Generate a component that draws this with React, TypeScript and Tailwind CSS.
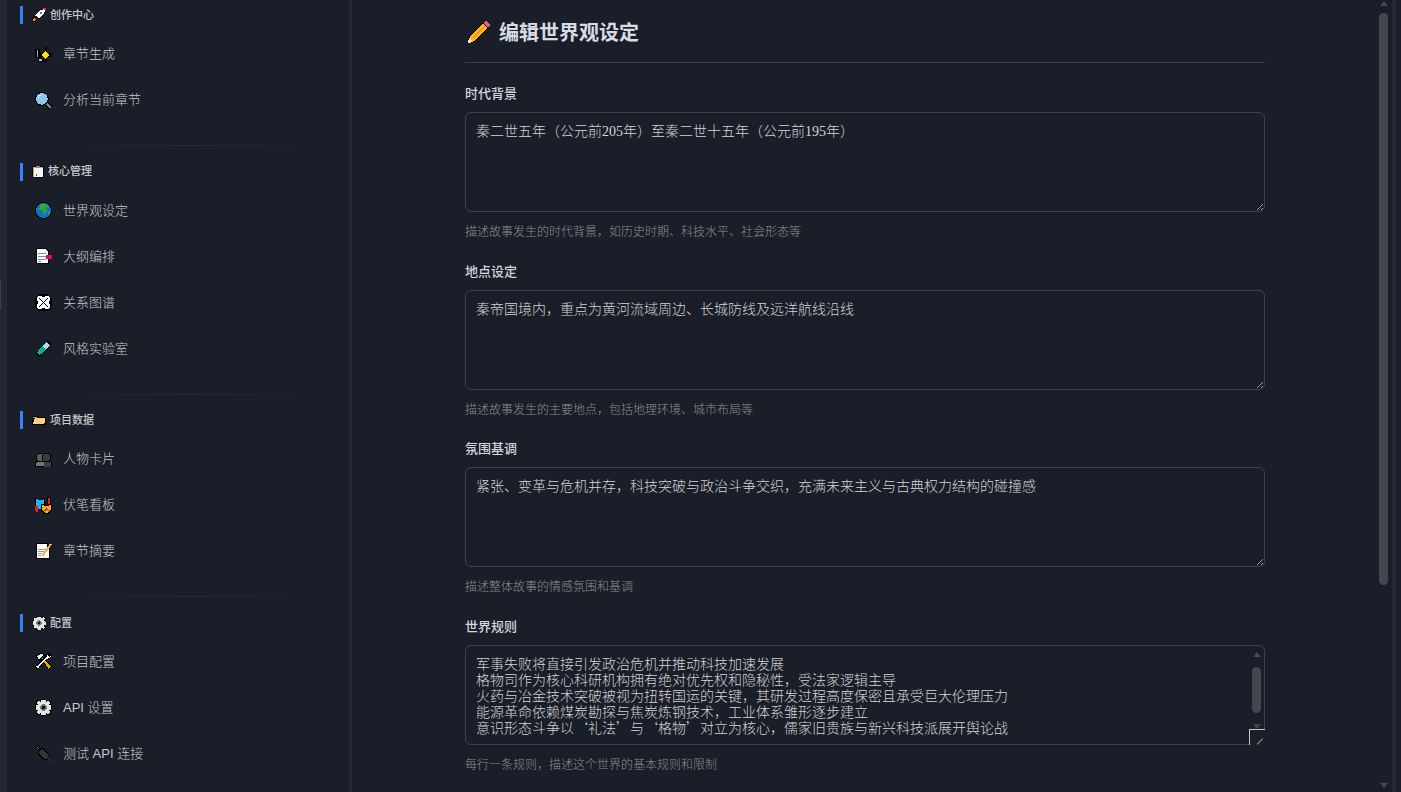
import type { ReactNode } from "react";

const FONT = "font-['Liberation_Sans','Noto_Sans_CJK_SC',sans-serif]";

/* emoji drawn by hand, the reference has aliased windows emoji */
const Svg = ({ size = 17, children }: { size?: number; children: ReactNode }) => (
  <svg width={size} height={size} viewBox="0 0 16 16" shapeRendering="crispEdges" className="shrink-0">
    {children}
  </svg>
);

const Rocket = () => (
  <Svg size={14}>
    <path d="M0 16l2-6 4 4z" fill="#f59e0b" stroke="#000" />
    <path d="M3 9C5 5 10 1 16 0c0 6-4 10-8 12z" fill="#fff" stroke="#000" />
    <path d="M12 0h4v4z" fill="#e02d2d" />
    <rect x="9" y="5" width="2" height="2" fill="#3b82f6" />
  </Svg>
);
const Clipboard = () => (
  <Svg size={12}>
    <rect x="1" y="1" width="14" height="14" fill="#c8a27a" stroke="#000" />
    <rect x="3" y="2" width="11" height="12" fill="#f4f4f4" />
    <rect x="5" y="11" width="2" height="2" fill="#555" />
    <rect x="5" y="0" width="6" height="2" fill="#888" />
  </Svg>
);
const Folder = () => (
  <Svg size={14}>
    <path d="M0 3h7l1 1h7l1 1v9H0z" fill="#000" />
    <path d="M3 6h12l-1 7H1z" fill="#ffd27a" />
    <rect x="1" y="4" width="5" height="2" fill="#f0a020" />
  </Svg>
);
const Gear = ({ size = 17 }: { size?: number }) => (
  <Svg size={size}>
    <path d="M6 0h4l1 2 2-1 2 2-1 2 2 1v4l-2 1 1 2-2 2-2-1-1 2H6l-1-2-2 1-2-2 1-2-2-1V6l2-1-1-2 2-2 2 1z" fill="#e4e4e4" stroke="#000" />
    <circle cx="8" cy="8" r="3" fill="#777" />
    <rect x="7" y="7" width="2" height="2" fill="#111" />
  </Svg>
);
const Sparkles = () => (
  <Svg>
    <rect x="9" y="1" width="2" height="15" fill="#000" />
    <rect x="5" y="7" width="11" height="3" fill="#000" />
    <path d="M10 4.500l3.500 4-3.500 4-3.500-4z" fill="#ffe600" />
    <rect x="0" y="3" width="5" height="8" fill="#000" />
    <rect x="2" y="4" width="1" height="6" fill="#37c6f4" />
    <rect x="3" y="11" width="5" height="4" fill="#000" />
    <rect x="4" y="12" width="3" height="2" fill="#f4a6c0" />
  </Svg>
);
const Magnifier = () => (
  <Svg>
    <path d="M9 9l6 6" stroke="#000" strokeWidth="4" />
    <path d="M10 10l5 5" stroke="#7b8a90" strokeWidth="2" />
    <circle cx="6.500" cy="6.500" r="6" fill="#8cc4f0" stroke="#000" />
    <path d="M3 6c0-2 1-3 3-3" stroke="#e8f4fc" fill="none" />
  </Svg>
);
const Globe = () => (
  <Svg>
    <circle cx="8" cy="8" r="7.500" fill="#0e70c8" stroke="#000" />
    <path d="M5 2h5l3 2-3 2 2 2-4 4-1-4-4-1 2-2z" fill="#35a635" />
    <path d="M12 9h2v2l-2 2z" fill="#35a635" />
  </Svg>
);
const Outline = () => (
  <Svg>
    <path d="M1 0h9l3 3v12H1z" fill="#fff" stroke="#000" />
    <path d="M3 5h7M3 8h7M3 11h7M3 13h3" stroke="#8a8a8a" />
    <rect x="10" y="7" width="6" height="3" fill="#e6007e" />
  </Svg>
);
const Web = () => (
  <Svg>
    <path d="M4 0h8l4 4v8l-4 4H4l-4-4V4z" fill="#000" />
    <path d="M3 2h10l1 1v10l-1 1H3l-1-1V3z" fill="#fff" />
    <path d="M4 4l8 8M12 4l-8 8" stroke="#000" />
    <rect x="7" y="2" width="2" height="1" fill="#000" />
    <rect x="7" y="13" width="2" height="1" fill="#000" />
    <rect x="2" y="7" width="1" height="2" fill="#000" />
    <rect x="13" y="7" width="1" height="2" fill="#000" />
  </Svg>
);
const TestTube = () => (
  <Svg>
    <path d="M12 0l4 4L6 14l-3 2-3-3 2-3z" fill="#000" />
    <path d="M11 2l3 3-8 8-2 1-2-2 1-2z" fill="#0fae94" />
    <path d="M11 2l3 3-4 4-3-3z" fill="#a9daf0" />
  </Svg>
);
const Busts = () => (
  <Svg>
    <path d="M0 15v-4l2-1h12l2 1v4z" fill="#767676" stroke="#000" />
    <rect x="8" y="10" width="7" height="5" fill="#3c3c3c" />
    <circle cx="5" cy="6" r="4" fill="#5a5a5a" stroke="#000" />
    <circle cx="11" cy="6" r="4" fill="#3c3c3c" stroke="#000" />
  </Svg>
);
const Masks = () => (
  <Svg>
    <path d="M0 1h2l1 1h4l1-1h1v8l-2 3H3l-3-2z" fill="#22b4f0" stroke="#000" />
    <path d="M0 8h3v7l-3-2z" fill="#e02020" />
    <path d="M12 0h3v7h-3z" fill="#e02020" stroke="#000" />
    <path d="M6 7h2l1 1h3l1-1h3v5l-4 4h-2l-4-4z" fill="#f7a81b" stroke="#000" />
    <path d="M9 13l2-2 2 2" stroke="#7a4a00" fill="none" />
  </Svg>
);
const Memo = () => (
  <Svg>
    <path d="M1 0h11v3l2 0v12H1z" fill="#fff" stroke="#000" />
    <path d="M3 6h7M3 8h5M3 10h4M3 12h3" stroke="#9a9a9a" />
    <path d="M7 12L15 1" stroke="#f5b942" strokeWidth="2" />
  </Svg>
);
const Tools = () => (
  <Svg>
    <path d="M5 5l3-1 8 9-3 3z" fill="#000" />
    <path d="M6 5l2 0 7 8-2 2z" fill="#f0a400" />
    <path d="M0 13L10 3l1-3h4l1 3-3 3-3 0-8 10z" fill="#000" />
    <path d="M1 13L11 4l1-3 1 3 2-1-2 2-3 1-7 8z" fill="#fff" />
    <path d="M1 3l5-3 4 2-3 1-3 4z" fill="#e8e8e8" stroke="#000" />
  </Svg>
);
const Plug = () => (
  <Svg>
    <path d="M1 2l1-1 4 3-1 2z" fill="#8a8a8a" stroke="#000" />
    <path d="M4 5l3-2 6 6 1 4-2 1-4-1-5-5z" fill="#343434" stroke="#000" />
    <path d="M12 12l4 4" stroke="#2a2a2a" strokeWidth="2" />
  </Svg>
);
const Pencil = () => (
  <svg width="22" height="22" viewBox="0 0 22 22" shapeRendering="crispEdges" className="shrink-0">
    <path d="M0 22l2-7L15 2l5 5L7 20z" fill="#fbb321" stroke="#000" />
    <path d="M5 17L17 5" stroke="#e08a00" />
    <path d="M15 2l3-2 4 4-2 3z" fill="#e8606e" />
    <path d="M1 17l4 4-5 1z" fill="#f5deb3" />
  </svg>
);

type Item = { icon: ReactNode; label: string };

const SECTIONS: { icon: ReactNode; title: string; items: Item[] }[] = [
  {
    icon: <Rocket />,
    title: "创作中心",
    items: [
      { icon: <Sparkles />, label: "章节生成" },
      { icon: <Magnifier />, label: "分析当前章节" },
    ],
  },
  {
    icon: <Clipboard />,
    title: "核心管理",
    items: [
      { icon: <Globe />, label: "世界观设定" },
      { icon: <Outline />, label: "大纲编排" },
      { icon: <Web />, label: "关系图谱" },
      { icon: <TestTube />, label: "风格实验室" },
    ],
  },
  {
    icon: <Folder />,
    title: "项目数据",
    items: [
      { icon: <Busts />, label: "人物卡片" },
      { icon: <Masks />, label: "伏笔看板" },
      { icon: <Memo />, label: "章节摘要" },
    ],
  },
  {
    icon: <Gear size={14} />,
    title: "配置",
    items: [
      { icon: <Tools />, label: "项目配置" },
      { icon: <Gear />, label: "API 设置" },
      { icon: <Plug />, label: "测试 API 连接" },
    ],
  },
];

const FIELDS = [
  {
    label: "时代背景",
    value: "秦二世五年（公元前205年）至秦二世十五年（公元前195年）",
    hint: "描述故事发生的时代背景，如历史时期、科技水平、社会形态等",
    digits: true,
  },
  {
    label: "地点设定",
    value: "秦帝国境内，重点为黄河流域周边、长城防线及远洋航线沿线",
    hint: "描述故事发生的主要地点，包括地理环境、城市布局等",
  },
  {
    label: "氛围基调",
    value: "紧张、变革与危机并存，科技突破与政治斗争交织，充满未来主义与古典权力结构的碰撞感",
    hint: "描述整体故事的情感氛围和基调",
  },
  {
    label: "世界规则",
    value: [
      "军事失败将直接引发政治危机并推动科技加速发展",
      "格物司作为核心科研机构拥有绝对优先权和隐秘性，受法家逻辑主导",
      "火药与冶金技术突破被视为扭转国运的关键，其研发过程高度保密且承受巨大伦理压力",
      "能源革命依赖煤炭勘探与焦炭炼钢技术，工业体系雏形逐步建立",
      "意识形态斗争以‘礼法’与‘格物’对立为核心，儒家旧贵族与新兴科技派展开舆论战",
    ].join("\n"),
    hint: "每行一条规则，描述这个世界的基本规则和限制",
    scroll: true,
  },
];

const ArrowUp = () => (
  <div className="w-0 h-0 border-x-[4.5px] border-x-transparent border-b-[5px] border-b-[#44474f]" />
);
const ArrowDown = () => (
  <div className="w-0 h-0 border-x-[4.5px] border-x-transparent border-t-[5px] border-t-[#44474f]" />
);

const Sidebar = () => (
  <aside className="w-[342px] shrink-0 h-full overflow-hidden pt-[6px] pl-[13px]">
    {SECTIONS.map((section, i) => (
      <div key={section.title}>
        {i > 0 && (
          <div className="ml-[30px] mr-[20px] h-px mt-[22.300px] mb-[16.300px] bg-gradient-to-r from-transparent via-[#262b37] to-transparent" />
        )}
        <div className="flex items-center h-[18px] border-l-[3px] border-[#3b82f6] pl-[9px] gap-[4px] text-[11px] font-medium text-[#c8c8c8]">
          {section.icon}
          <span>{section.title}</span>
        </div>
        <div className="mt-[7px]">
          {section.items.map((item) => (
            <div key={item.label} className="flex items-center h-[46px] pl-[15px] gap-[11px] text-[13px] font-light text-[#c8c8c8]">
              {item.icon}
              <span>{item.label}</span>
            </div>
          ))}
        </div>
      </div>
    ))}
  </aside>
);

export default function App() {
  return (
    <div className={`relative flex h-[792px] w-[1401px] overflow-hidden bg-[#1a1e29] ${FONT}`}>
      <div className="w-[7px] shrink-0 bg-[#222834]" />
      <div className="absolute left-0 top-[280px] h-[30px] w-px bg-[#39404e]" />
      <Sidebar />
      <div className="w-[3px] shrink-0 bg-[#222834]" />

      <main className="flex-1 pl-[113px] pt-[20px] overflow-hidden">
        <div className="w-[800px]">
          <div className="flex items-center gap-[9px] h-[24px] pl-[3px] mb-[18px] text-[20px] font-bold text-[#d8dbe3]">
            <Pencil />
            <h1 className="pt-px">编辑世界观设定</h1>
          </div>
          <div className="h-px bg-[#3c4049] mb-[21px]" />

          {FIELDS.map((field) => (
            <div key={field.label} className="mb-[19.670px]">
              <label className="block h-[19px] mb-[9px] leading-[19px] text-[13px] font-medium text-[#d3d6db]">
                {field.label}
              </label>
              <div className="relative h-[100px]">
                <textarea
                  readOnly
                  defaultValue={field.value}
                  className={`block w-full h-full resize-y overflow-hidden bg-transparent border border-[#3f434c] rounded-[6px] px-[10px] text-[14px] leading-[16px] font-light text-[#d4d4d4] outline-none ${
                    field.digits
                      ? "pt-[11px] font-['Liberation_Serif','Noto_Sans_CJK_SC',serif]"
                      : "pt-[9px] font-['Noto_Sans_CJK_SC',sans-serif]"
                  }`}
                />
                {field.scroll && (
                  <>
                    <div className="absolute right-[4px] top-[7px] w-[9px] h-[77px] flex flex-col items-center justify-between">
                      <ArrowUp />
                      <div className="w-[9px] h-[46px] rounded-full bg-[#44474f]" />
                      <ArrowDown />
                    </div>
                    <div className="absolute right-0 bottom-0 w-[16px] h-[16px] border-t border-l border-[#c4c4c4] bg-[#1a1e29]">
                      <div className="absolute right-[1px] bottom-[3px] w-[8px] h-px -rotate-45 bg-[#9a9a9a]" />
                    </div>
                  </>
                )}
              </div>
              <p className="h-[19px] mt-[11px] leading-[19px] text-[12px] font-light text-[#8e8e8e]">{field.hint}</p>
            </div>
          ))}
        </div>
      </main>

      <div className="w-[9px] shrink-0 h-full flex flex-col items-center pt-px pb-[4px]">
        <ArrowUp />
        <div className="w-[9px] h-[572px] mt-[7px] rounded-full bg-[#44474f]" />
        <div className="flex-1" />
        <ArrowDown />
      </div>
      <div className="w-[4px] shrink-0 ml-[4px] bg-[#222834]" />
      <div className="w-[5px] shrink-0" />
    </div>
  );
}
